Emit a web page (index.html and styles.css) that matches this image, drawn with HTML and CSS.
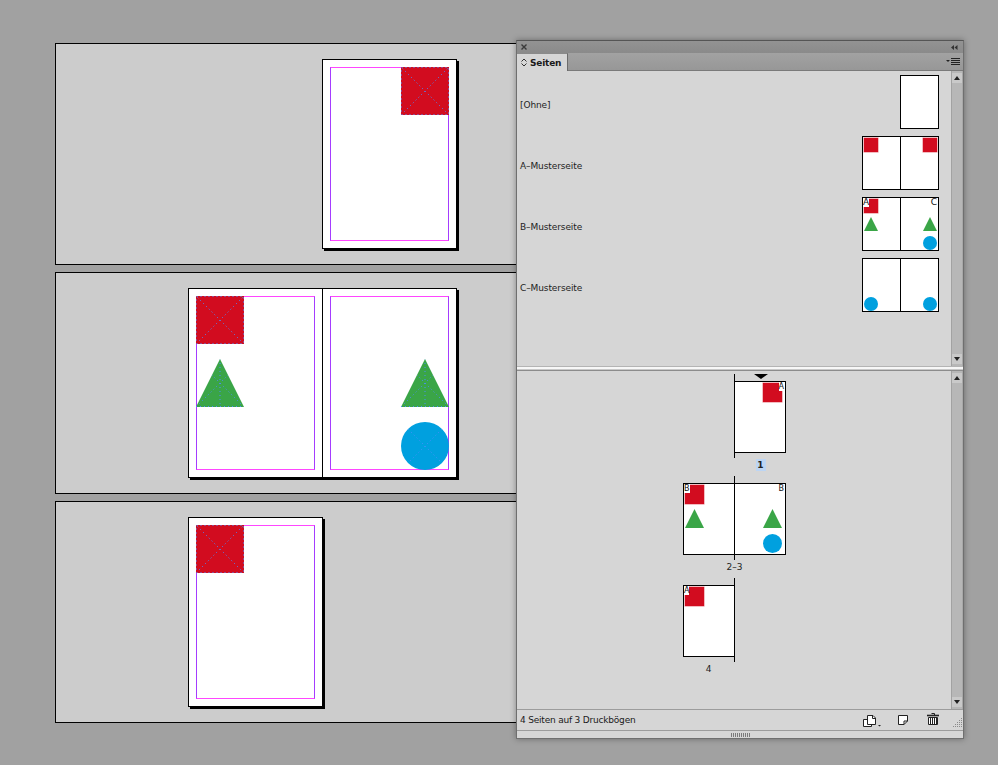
FILE: index.html
```html
<!DOCTYPE html>
<html lang="de">
<head>
<meta charset="utf-8">
<title>Seiten</title>
<link rel="stylesheet" href="styles.css">
</head>
<body>
<svg class="defs" width="0" height="0" aria-hidden="true">
  <defs>
    <clipPath id="clipTri"><polygon points="24,0 48,48 0,48"/></clipPath>
    <clipPath id="clipCirc"><circle cx="24" cy="24" r="24"/></clipPath>
    <symbol id="sq" viewBox="0 0 48 48">
      <rect width="48" height="48" fill="#d20c1f"/>
      <path d="M1.5 1.5L46.5 46.5M46.5 1.5L1.5 46.5" stroke="#4d8dff" stroke-width="1" stroke-dasharray="1 3" fill="none"/>
      <rect x="0.5" y="0.5" width="47" height="47" fill="none" stroke="#4d8dff" stroke-dasharray="1 3"/>
    </symbol>
    <symbol id="tri" viewBox="0 0 48 48">
      <polygon points="24,0 48,48 0,48" fill="#3aa547"/>
      <g clip-path="url(#clipTri)">
        <path d="M1.5 1.5L46.5 46.5M46.5 1.5L1.5 46.5M24 0V48" stroke="#4d8dff" stroke-dasharray="1 3" fill="none"/>
      </g>
      <path d="M0 47.5H48" stroke="#4d8dff" stroke-dasharray="1 3" fill="none"/>
    </symbol>
    <symbol id="circ" viewBox="0 0 48 48">
      <circle cx="24" cy="24" r="24" fill="#00a0df"/>
      <g clip-path="url(#clipCirc)">
        <path d="M1.5 1.5L46.5 46.5M46.5 1.5L1.5 46.5" stroke="#4d8dff" stroke-dasharray="1 3" fill="none"/>
      </g>
    </symbol>
  </defs>
</svg>

<div class="canvas">
  <div class="cv-row from-spine">
    <div class="cv-spread">
      <div class="cv-page">
        <div class="margins">
          <svg class="obj tr" width="48" height="48"><use href="#sq"/></svg>
        </div>
      </div>
    </div>
  </div>
  <div class="cv-row">
    <div class="cv-spread">
      <div class="cv-page">
        <div class="margins">
          <svg class="obj tl" width="48" height="48"><use href="#sq"/></svg>
          <svg class="obj ml" width="48" height="48"><use href="#tri"/></svg>
        </div>
      </div>
      <div class="cv-page">
        <div class="margins">
          <svg class="obj mr" width="48" height="48"><use href="#tri"/></svg>
          <svg class="obj br" width="48" height="48"><use href="#circ"/></svg>
        </div>
      </div>
    </div>
  </div>
  <div class="cv-row">
    <div class="cv-spread">
      <div class="cv-page">
        <div class="margins">
          <svg class="obj tl" width="48" height="48"><use href="#sq"/></svg>
        </div>
      </div>
    </div>
  </div>
</div>

<div class="panel">
  <div class="titlebar">
    <svg class="close" width="6" height="6" viewBox="0 0 6 6"><path d="M0.5 0.5L5.5 5.5M5.5 0.5L0.5 5.5" stroke="#3a3a3a" stroke-width="1.4"/></svg>
    <svg class="collapse" width="7" height="5" viewBox="0 0 7 5"><path d="M0 2.5L3 0V5Z M3.5 2.5L6.5 0V5Z" fill="#333"/></svg>
  </div>
  <div class="tabstrip">
    <div class="tab">
      <svg class="updown" width="6" height="9" viewBox="0 0 6 9"><path d="M0.5 3.5L3 1L5.5 3.5M0.5 5.5L3 8L5.5 5.5" stroke="#333" stroke-width="1" fill="none"/></svg>
      <span>Seiten</span>
    </div>
    <div class="tabfill">
      <svg class="menu" width="15" height="8" viewBox="0 0 15 8"><path d="M0 2H4L2 4Z" fill="#222"/><path d="M5 0.5H14M5 2.5H14M5 4.5H14M5 6.5H14" stroke="#222" stroke-width="1"/></svg>
    </div>
  </div>

  <div class="section upper">
    <div class="list">
      <div class="mrow">
        <span class="mlabel">[Ohne]</span>
        <div class="mthumb">
          <div class="mpage solo"></div>
        </div>
      </div>
      <div class="mrow">
        <span class="mlabel">A–Musterseite</span>
        <div class="mthumb">
          <div class="mpage left"><i class="m-sq at-tl"></i></div>
          <div class="mspine"></div>
          <div class="mpage right"><i class="m-sq at-tr"></i></div>
        </div>
      </div>
      <div class="mrow">
        <span class="mlabel">B–Musterseite</span>
        <div class="mthumb">
          <div class="mpage left"><i class="m-sq at-tl"></i><i class="m-tri at-ml"></i><b class="mletter l">A</b></div>
          <div class="mspine"></div>
          <div class="mpage right"><i class="m-tri at-mr"></i><i class="m-circ at-br"></i><b class="mletter r">C</b></div>
        </div>
      </div>
      <div class="mrow">
        <span class="mlabel">C–Musterseite</span>
        <div class="mthumb">
          <div class="mpage left"><i class="m-circ at-bl"></i></div>
          <div class="mspine"></div>
          <div class="mpage right"><i class="m-circ at-br"></i></div>
        </div>
      </div>
    </div>
    <div class="scroll">
      <div class="sbtn"><i class="up"></i></div>
      <div class="sbtn"><i class="down"></i></div>
    </div>
  </div>

  <div class="divider"></div>

  <div class="section lower">
    <div class="pages">
      <div class="spread">
        <div class="spine"></div>
        <div class="marker"></div>
        <div class="ppage c3"><i class="p-sq at-tr"></i><b class="pletter r">A</b></div>
        <div class="plabel c3"><span class="sel">1</span></div>
      </div>
      <div class="spread">
        <div class="spine"></div>
        <div class="ppage c1"><i class="p-sq at-tl"></i><i class="p-tri at-ml"></i><b class="pletter l">B</b></div>
        <div class="ppage c3"><i class="p-tri at-mr"></i><i class="p-circ at-br"></i><b class="pletter r">B</b></div>
        <div class="plabel call">2–3</div>
      </div>
      <div class="spread">
        <div class="spine"></div>
        <div class="ppage c1"><i class="p-sq at-tl"></i><b class="pletter l">A</b></div>
        <div class="plabel c1">4</div>
      </div>
    </div>
    <div class="scroll">
      <div class="sbtn"><i class="up"></i></div>
      <div class="sbtn"><i class="down"></i></div>
    </div>
  </div>

  <div class="status">
    <span class="stext">4 Seiten auf 3 Druckbögen</span>
    <div class="icons">
      <svg class="ic ic-size" width="18" height="12" viewBox="0 0 18 12">
        <path d="M0.5 4.5H8.5V11.5H0.5Z" fill="#fff" stroke="#222"/>
        <path d="M4.5 0.5H10L12.5 3V9.5H4.5Z" fill="#fff" stroke="#222"/>
        <path d="M9.5 0.5V3.5H12.5" fill="none" stroke="#222"/>
        <path d="M15 10H18L16.5 11.5Z" fill="#222"/>
      </svg>
      <svg class="ic ic-new" width="10" height="10" viewBox="0 0 10 10">
        <path d="M0.5 0.5H9.5V6L6 9.5H0.5Z" fill="#fff" stroke="#222"/>
        <path d="M6 9.5V6H9.5" fill="none" stroke="#222"/>
      </svg>
      <svg class="ic ic-trash" width="12" height="12" viewBox="0 0 12 12">
        <path d="M4.5 0.5H7.5V2" fill="none" stroke="#222"/>
        <path d="M0 2.5H12" stroke="#222" stroke-width="1.6"/>
        <path d="M1.5 4.5H10.5V11.5H1.5Z" fill="#fff" stroke="#222"/>
        <path d="M3.5 5V11M5.5 5V11M7.5 5V11M9.5 5V11" stroke="#222"/>
      </svg>
      <svg class="ic ic-resize" width="10" height="9" viewBox="0 0 10 9">
        <g fill="#8a8a8a">
          <rect x="8" y="0" width="1" height="1"/>
          <rect x="6" y="2" width="1" height="1"/><rect x="8" y="2" width="1" height="1"/>
          <rect x="4" y="4" width="1" height="1"/><rect x="6" y="4" width="1" height="1"/><rect x="8" y="4" width="1" height="1"/>
          <rect x="2" y="6" width="1" height="1"/><rect x="4" y="6" width="1" height="1"/><rect x="6" y="6" width="1" height="1"/><rect x="8" y="6" width="1" height="1"/>
          <rect x="0" y="8" width="1" height="1"/><rect x="2" y="8" width="1" height="1"/><rect x="4" y="8" width="1" height="1"/><rect x="6" y="8" width="1" height="1"/><rect x="8" y="8" width="1" height="1"/>
        </g>
      </svg>
    </div>
  </div>
  <div class="grip"><span class="griplines"></span></div>
</div>
</body>
</html>
```

FILE: styles.css
```css
* { box-sizing: border-box; }
html, body { margin: 0; padding: 0; }
body {
  width: 998px;
  height: 765px;
  overflow: hidden;
  position: relative;
  background: #a1a1a1;
  font-family: "DejaVu Sans", "Liberation Sans", sans-serif;
  font-size: 9px;
  color: #1e1e1e;
}
.defs { position: absolute; width: 0; height: 0; overflow: hidden; }

/* ---------- layout canvas ---------- */
.canvas {
  display: flex;
  flex-direction: column;
  gap: 7px;
  padding: 43px 0 0 55px;
}
.cv-row {
  width: 560px;
  height: 222px;
  border: 1px solid #000;
  background: #cccccc;
  display: flex;
  align-items: center;
  padding-left: 132px;
}
.cv-row.from-spine { padding-left: 266px; }
.cv-spread {
  display: flex;
  box-shadow: 2px 2px 0 #000;
}
.cv-page {
  width: 135px;
  height: 190px;
  border: 1px solid #000;
  background: #fff;
  padding: 7px;
}
.cv-page + .cv-page { margin-left: -1px; }
.margins {
  height: 100%;
  position: relative;
  border: 1px solid;
  border-color: #ff46ff #a53cff;
}
.obj { position: absolute; display: block; }
.obj.tl { left: -1px; top: -1px; }
.obj.tr { right: -1px; top: -1px; }
.obj.ml { left: -1px; top: 62px; }
.obj.mr { right: -1px; top: 62px; }
.obj.br { right: -1px; bottom: -1px; }

/* ---------- panel ---------- */
.panel {
  position: absolute;
  left: 516px;
  top: 40px;
  width: 448px;
  height: 699px;
  border: 1px solid #6f6f6f;
  border-top-color: #555;
  background: #d6d6d6;
  display: flex;
  flex-direction: column;
  box-shadow: 0 0 6px rgba(0, 0, 0, 0.35);
}
.titlebar {
  height: 12px;
  flex: none;
  background: linear-gradient(#939393, #8a8a8a);
  display: flex;
  align-items: center;
  justify-content: space-between;
  padding: 0 5px 0 4px;
}
.close, .collapse { display: block; }
.tabstrip {
  height: 18px;
  flex: none;
  display: flex;
}
.tab {
  width: 51px;
  background: #d6d6d6;
  border-top: 1px solid #8a8a8a;
  border-right: 1px solid #6c6c6c;
  display: flex;
  align-items: center;
  gap: 3px;
  padding-left: 4px;
  font-weight: bold;
  font-size: 9px;
  letter-spacing: -0.2px;
  color: #1a1a1a;
}
.updown { display: block; flex: none; }
.tabfill {
  flex: 1;
  background: linear-gradient(#a2a2a2, #979797);
  border-bottom: 1px solid #7a7a7a;
  display: flex;
  align-items: center;
  justify-content: flex-end;
  padding-right: 2px;
}
.menu { display: block; }

.section { display: flex; flex: none; }
.upper { height: 295px; }
.lower { height: 338px; }

.list {
  flex: 1;
  display: flex;
  flex-direction: column;
  gap: 7px;
  padding: 4px 12px 0 3px;
}
.mrow {
  display: flex;
  align-items: center;
  justify-content: space-between;
}
.mlabel { padding-top: 6px; letter-spacing: -0.1px; }
.mthumb { display: flex; height: 54px; }
.mpage {
  position: relative;
  width: 38px;
  height: 54px;
  background: #fff;
  border: 1px solid #000;
}
.mpage.solo { width: 39px; }
.mpage.left { border-right: none; }
.mpage.right { border-left: none; }
.mspine { width: 1px; background: #000; }

.m-sq, .m-tri, .m-circ { position: absolute; width: 14px; height: 14px; display: block; }
.m-sq { background: #d20c1f; box-shadow: 0 0 0 0.5px #e87a84; }
.m-tri { background: #3aa547; clip-path: polygon(50% 0, 100% 100%, 0 100%); }
.m-circ { background: #00a0df; border-radius: 50%; }
.mpage .at-tl { left: 1px; top: 1px; }
.mpage .at-tr { right: 1px; top: 1px; }
.mpage .at-ml { left: 1px; top: 19px; }
.mpage .at-mr { right: 1px; top: 19px; }
.mpage .at-br { right: 1px; bottom: 0; }
.mpage .at-bl { left: 1px; bottom: 0; }
.mletter {
  position: absolute;
  top: 0;
  font-weight: normal;
  font-size: 9px;
  line-height: 9px;
  color: #111;
}
.mletter.l { left: 0; background: #fff; }
.mletter.r { right: 1px; }

.scroll {
  width: 12px;
  flex: none;
  background: #b7b7b7;
  border-left: 1px solid #a2a2a2;
  border-right: 1px solid #a8a8a8;
  display: flex;
  flex-direction: column;
  justify-content: space-between;
  padding: 2px 0;
}
.sbtn {
  height: 10px;
  display: flex;
  align-items: center;
  justify-content: center;
  background: #c9c9c9;
}
.sbtn i { display: block; width: 0; height: 0; border-left: 3px solid transparent; border-right: 3px solid transparent; }
.sbtn .up { border-bottom: 4px solid #222; }
.sbtn .down { border-top: 4px solid #222; }

.divider {
  height: 5px;
  flex: none;
  background: linear-gradient(#b4b4b4 0, #b4b4b4 1px, #f7f7f7 1px, #f7f7f7 3px, #c8c8c8 3px, #c8c8c8 4px, #8c8c8c 4px);
}

.pages {
  flex: 1;
  display: flex;
  flex-direction: column;
  align-items: center;
  gap: 4px;
  padding: 3px 0 0 1px;
}
.spread {
  display: grid;
  grid-template-columns: 51px 1px 51px;
  grid-template-rows: 7px 72px 5px 14px;
}
.spine { grid-column: 2; grid-row: 1 / 4; background: #000; }
.marker {
  grid-column: 3;
  grid-row: 1;
  justify-self: center;
  align-self: start;
  width: 0;
  height: 0;
  border-left: 7px solid transparent;
  border-right: 7px solid transparent;
  border-top: 5px solid #000;
}
.ppage {
  grid-row: 2;
  position: relative;
  background: #fff;
  border: 1px solid #000;
}
.ppage.c1 { grid-column: 1; border-right: none; }
.ppage.c3 { grid-column: 3; border-left: none; }
.p-sq, .p-tri, .p-circ { position: absolute; width: 19px; height: 19px; display: block; }
.p-sq { background: #d20c1f; box-shadow: 0 0 0 0.5px #e87a84; }
.p-tri { background: #3aa547; clip-path: polygon(50% 0, 100% 100%, 0 100%); }
.p-circ { background: #00a0df; border-radius: 50%; }
.ppage .at-tl { left: 1px; top: 1px; }
.ppage .at-tr { right: 3px; top: 1px; }
.ppage .at-ml { left: 1px; top: 25px; }
.ppage .at-mr { right: 3px; top: 25px; }
.ppage .at-br { right: 3px; bottom: 1px; }
.pletter {
  position: absolute;
  top: 0;
  font-weight: normal;
  font-size: 8px;
  line-height: 9px;
  color: #111;
  background: #fff;
}
.pletter.l { left: 0; }
.pletter.r { right: 1px; }
.ppage.c3 .pletter.r { background: transparent; }
.ppage.c3 .at-tr + .pletter.r { background: #fff; }

.plabel {
  grid-row: 4;
  text-align: center;
  font-size: 9px;
  line-height: 12px;
  padding-top: 1px;
  color: #222;
}
.plabel.c1 { grid-column: 1; }
.plabel.c3 { grid-column: 3; }
.plabel.call { grid-column: 1 / 4; }
.sel {
  display: inline-block;
  width: 10px;
  height: 12px;
  background: #bcd5f4;
  line-height: 12px;
  font-weight: bold;
}

.status {
  height: 21px;
  flex: none;
  border-top: 1px solid #9c9c9c;
  display: flex;
  align-items: center;
  padding-left: 3px;
}
.stext { letter-spacing: -0.2px; color: #1a1a1a; }
.icons {
  margin-left: auto;
  display: flex;
  align-items: center;
}
.ic { display: block; }
.ic-size { margin-right: 17px; margin-top: 1px; }
.ic-new { margin-right: 19px; }
.ic-trash { margin-right: 14px; margin-top: -2px; }
.ic-resize { margin-right: 0; margin-top: 5px; }

.grip {
  height: 8px;
  flex: none;
  border-top: 1px solid #9c9c9c;
  display: flex;
  align-items: center;
  justify-content: center;
  padding-left: 1px;
}
.griplines {
  display: block;
  width: 19px;
  height: 4px;
  background: repeating-linear-gradient(90deg, #7a7a7a 0, #7a7a7a 1px, transparent 1px, transparent 2px);
}
```
